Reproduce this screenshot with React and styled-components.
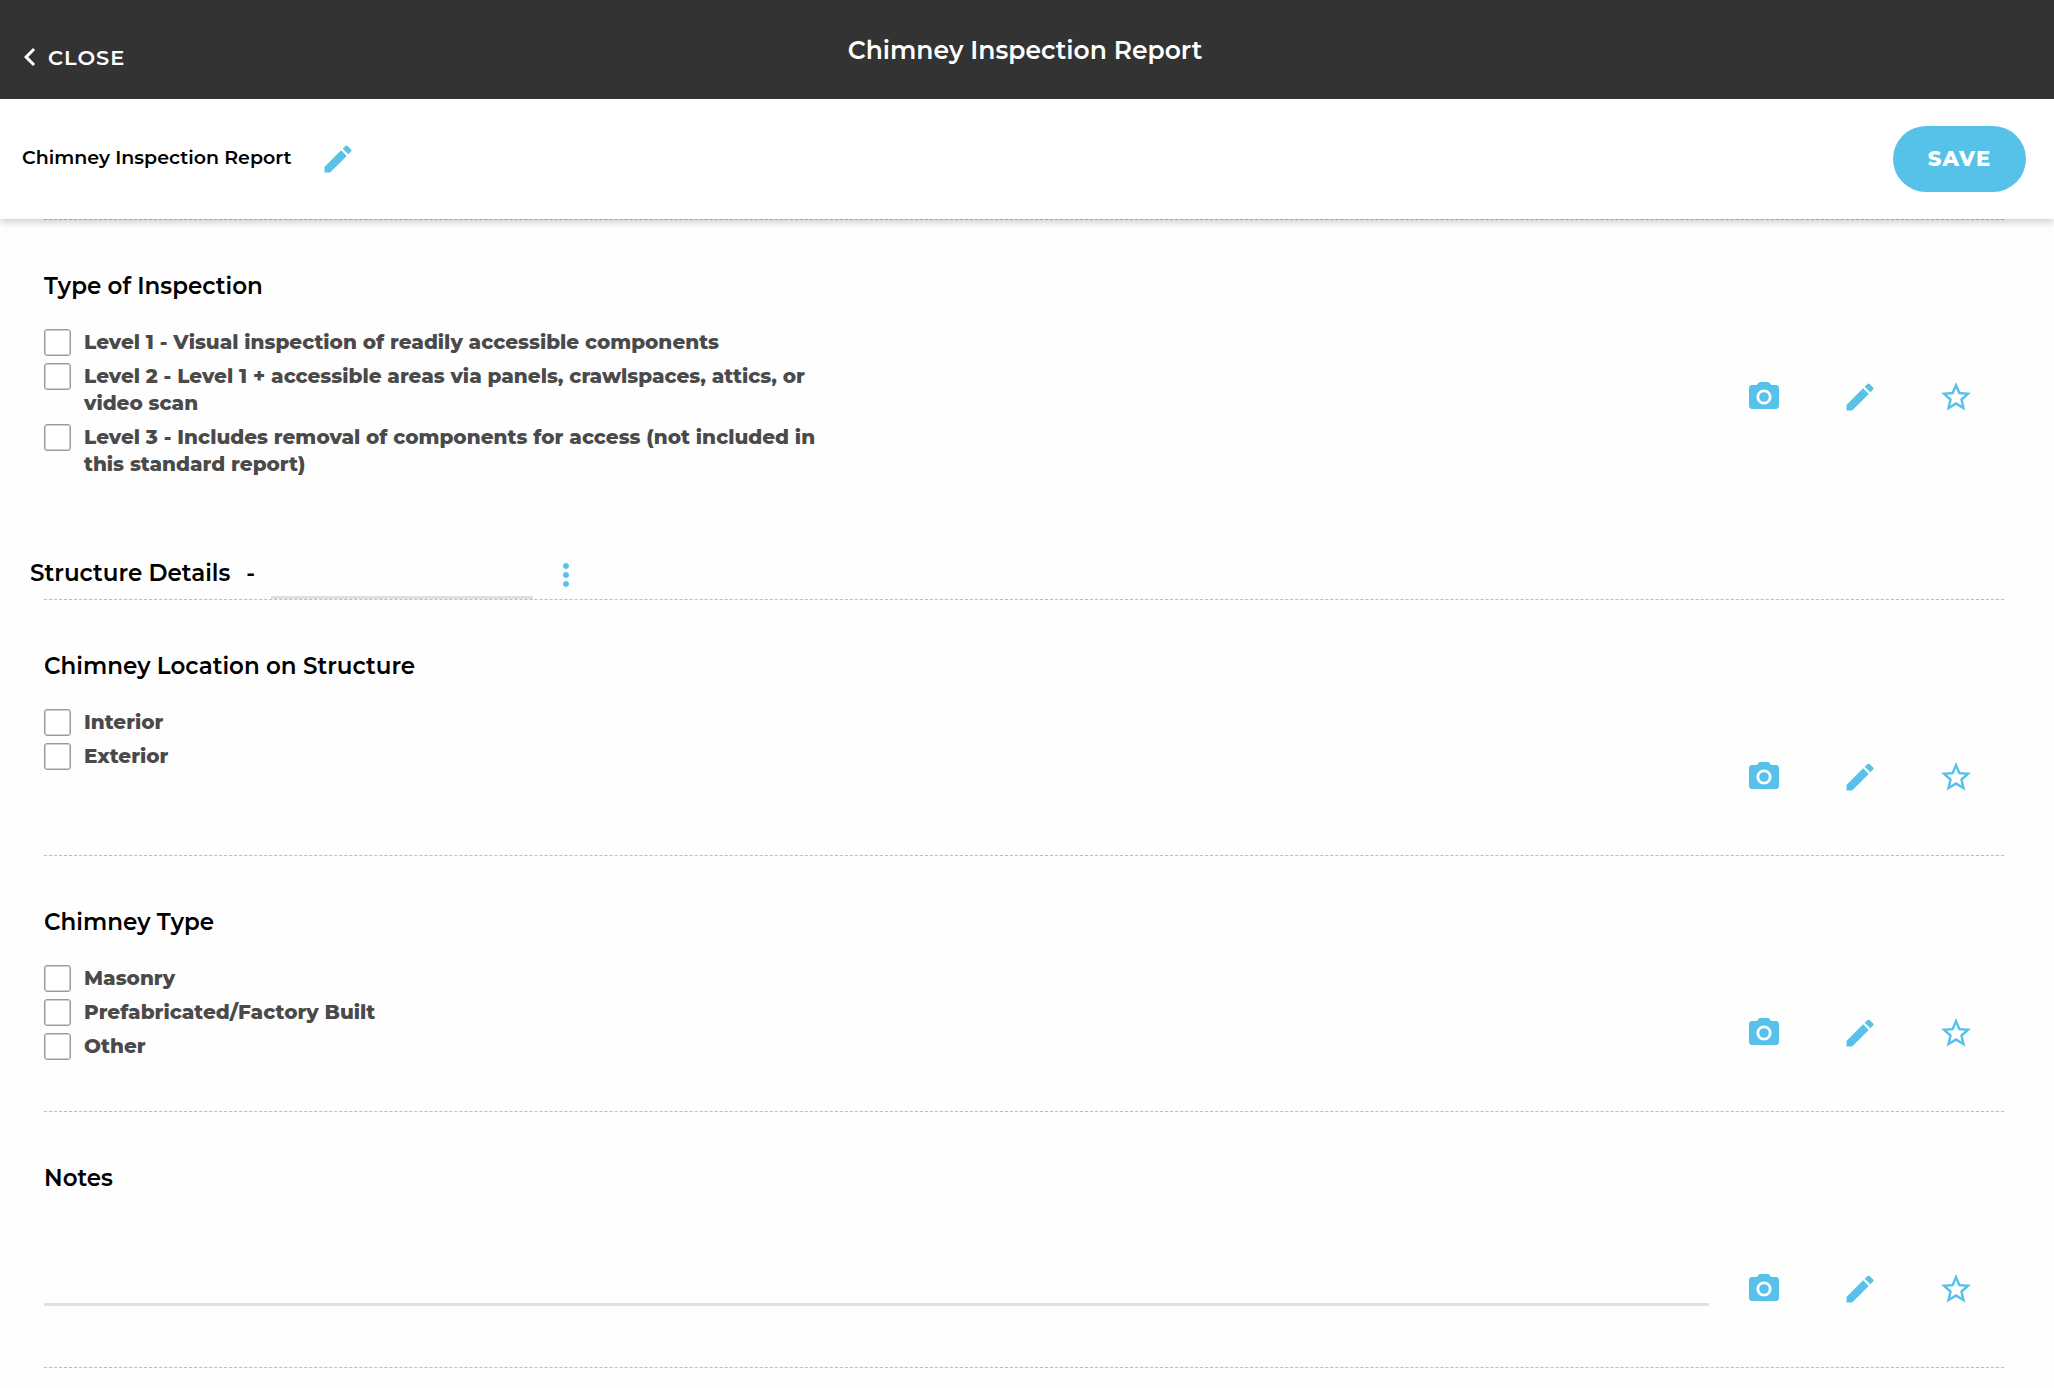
import React, { useState } from "react";
import styled, { createGlobalStyle } from "styled-components";
import {
  MdChevronLeft,
  MdEdit,
  MdMoreVert,
  MdPhotoCamera,
  MdStarBorder,
} from "react-icons/md";

const inspectionTypes = [
  "Level 1 - Visual inspection of readily accessible components",
  "Level 2 - Level 1 + accessible areas via panels, crawlspaces, attics, or video scan",
  "Level 3 - Includes removal of components for access (not included in this standard report)",
];

const App = () => {
  const [checked, setChecked] = useState({});
  const [starred, setStarred] = useState({});
  const [structureName, setStructureName] = useState("");
  const [notes, setNotes] = useState("");

  const handleCheck = (option) => {
    setChecked({ ...checked, [option]: !checked[option] });
  };

  const handleStar = (title) => {
    setStarred({ ...starred, [title]: !starred[title] });
  };

  const renderSection = (title, content) => (
    <Section>
      <SectionBody>
        <SectionTitle>{title}</SectionTitle>
        {content}
      </SectionBody>
      <Actions>
        <IconButton aria-label={`Add photo to ${title}`}>
          <MdPhotoCamera size={36} />
        </IconButton>
        <IconButton aria-label={`Edit ${title}`}>
          <MdEdit size={36} />
        </IconButton>
        <IconButton
          aria-label={`Star ${title}`}
          aria-pressed={Boolean(starred[title])}
          onClick={() => handleStar(title)}
        >
          <MdStarBorder size={36} />
        </IconButton>
      </Actions>
    </Section>
  );

  const renderOptions = (options) => (
    <OptionList>
      {options.map((option) => (
        <li key={option}>
          <Option>
            <Checkbox
              type="checkbox"
              checked={Boolean(checked[option])}
              onChange={() => handleCheck(option)}
            />
            <span>{option}</span>
          </Option>
        </li>
      ))}
    </OptionList>
  );

  return (
    <>
      <GlobalStyle />
      <TopBar>
        <CloseButton>
          <MdChevronLeft size={36} />
          CLOSE
        </CloseButton>
        <PageTitle>Chimney Inspection Report</PageTitle>
      </TopBar>
      <SubBar>
        <ReportName>Chimney Inspection Report</ReportName>
        <EditNameButton aria-label="Edit report name">
          <MdEdit size={36} />
        </EditNameButton>
        <SaveButton>SAVE</SaveButton>
      </SubBar>
      <Main>
        {renderSection("Type of Inspection", renderOptions(inspectionTypes))}
        <GroupHeader>
          <GroupLabel htmlFor="structure-name">Structure Details</GroupLabel>
          <Dash>-</Dash>
          <GroupInput
            id="structure-name"
            value={structureName}
            onChange={(ev) => setStructureName(ev.target.value)}
          />
          <MoreButton aria-label="More options">
            <MdMoreVert size={36} />
          </MoreButton>
        </GroupHeader>
        {renderSection(
          "Chimney Location on Structure",
          renderOptions(["Interior", "Exterior"])
        )}
        {renderSection(
          "Chimney Type",
          renderOptions(["Masonry", "Prefabricated/Factory Built", "Other"])
        )}
        {renderSection(
          "Notes",
          <NotesInput
            aria-label="Notes"
            value={notes}
            onChange={(ev) => setNotes(ev.target.value)}
          />
        )}
        <Divider />
      </Main>
    </>
  );
};

const GlobalStyle = createGlobalStyle`
  :root {
    --accent: #56c1e9;
    --line: #bdbdbd;
    --underline: #e0e0e0;
  }

  * {
    box-sizing: border-box;
  }

  body {
    margin: 0;
    background-color: #fefefe;
    color: #000;
    font-family: Gotham, Montserrat, Inter, sans-serif;
  }

  button,
  input,
  textarea {
    font-family: inherit;
  }
`;

const TopBar = styled.header`
  position: relative;
  z-index: 2;
  display: grid;
  grid-template-columns: 1fr auto 1fr;
  align-items: center;
  min-height: 99px;
  padding: 0 16px 0 12px;
  background-color: #333;
  color: #fff;
`;

const PlainButton = styled.button`
  display: flex;
  align-items: center;
  justify-content: center;
  padding: 0;
  border: none;
  background-color: transparent;
  cursor: pointer;
`;

const CloseButton = styled(PlainButton)`
  justify-self: start;
  padding-top: 15px;
  color: inherit;
  font-size: 21px;
  font-weight: 600;
  letter-spacing: 1px;
`;

const PageTitle = styled.h1`
  margin: 0;
  font-size: 25px;
  font-weight: 600;
  line-height: 32px;
`;

const SubBar = styled.div`
  position: relative;
  z-index: 1;
  display: flex;
  align-items: center;
  min-height: 120px;
  padding: 0 28px 0 22px;
  background-color: #fff;
  box-shadow: 0 3px 8px rgba(0, 0, 0, 0.2);
`;

const ReportName = styled.h2`
  margin: 0;
  padding-bottom: 3px;
  font-size: 19px;
  font-weight: 600;
  line-height: 28px;
`;

const EditNameButton = styled(PlainButton)`
  margin-left: 28px;
  color: var(--accent);
`;

const SaveButton = styled.button`
  height: 66px;
  margin-left: auto;
  padding: 0 35px 2px;
  border: none;
  border-radius: 33px;
  background-color: var(--accent);
  color: #fff;
  font-size: 21px;
  font-weight: 800;
  letter-spacing: 1px;
  cursor: pointer;
`;

const Main = styled.main`
  padding: 0 50px 21px 44px;
`;

const Section = styled.section`
  display: grid;
  grid-template-columns: 1fr auto;
  align-items: start;
  min-height: 256px;
  padding-top: 50px;
  border-top: 1px dashed var(--line);
`;

const SectionBody = styled.div`
  padding-right: 7px;
`;

const SectionTitle = styled.h3`
  margin: 0 0 27px;
  font-size: 23px;
  font-weight: 600;
  line-height: 32px;
`;

const Actions = styled.div`
  display: flex;
  margin-top: 103px;
`;

const IconButton = styled(PlainButton)`
  width: 96px;
  height: 48px;
  color: var(--accent);
`;

const OptionList = styled.ul`
  display: flex;
  flex-direction: column;
  gap: 7px;
  width: 47%;
  margin: 0;
  padding: 0;
  list-style: none;
`;

const Option = styled.label`
  display: flex;
  align-items: flex-start;
  gap: 13px;
  color: #4a4a4a;
  font-size: 20px;
  font-weight: 800;
  line-height: 27px;
`;

const Checkbox = styled.input`
  appearance: none;
  flex: none;
  width: 27px;
  height: 27px;
  margin: 0;
  border: 1px solid #999;
  border-radius: 3px;
  background-color: #fff;
  box-shadow: inset 0 0 0 1px #d0d0d0;

  &:checked {
    background-color: var(--accent);
  }
`;

const GroupHeader = styled.div`
  display: flex;
  align-items: flex-end;
  height: 121px;
  margin-left: -14px;
`;

const GroupLabel = styled.label`
  padding-bottom: 10px;
  font-size: 23px;
  font-weight: 600;
  line-height: 32px;
`;

const Dash = styled.span`
  padding: 0 16px 10px;
  font-size: 23px;
  font-weight: 600;
  line-height: 32px;
`;

const GroupInput = styled.input`
  width: 262px;
  height: 48px;
  border: none;
  border-bottom: 3px solid var(--underline);
  outline: none;
  background-color: transparent;
  font-size: 20px;
`;

const MoreButton = styled(PlainButton)`
  margin-left: 15px;
  padding-bottom: 6px;
  color: var(--accent);
`;

const NotesInput = styled.textarea`
  display: block;
  width: 100%;
  height: 85px;
  padding: 0;
  border: none;
  border-bottom: 3px solid var(--underline);
  outline: none;
  resize: none;
  background-color: transparent;
  font-size: 20px;
`;

const Divider = styled.hr`
  margin: 0;
  border: none;
  border-top: 1px dashed var(--line);
`;

export default App;
